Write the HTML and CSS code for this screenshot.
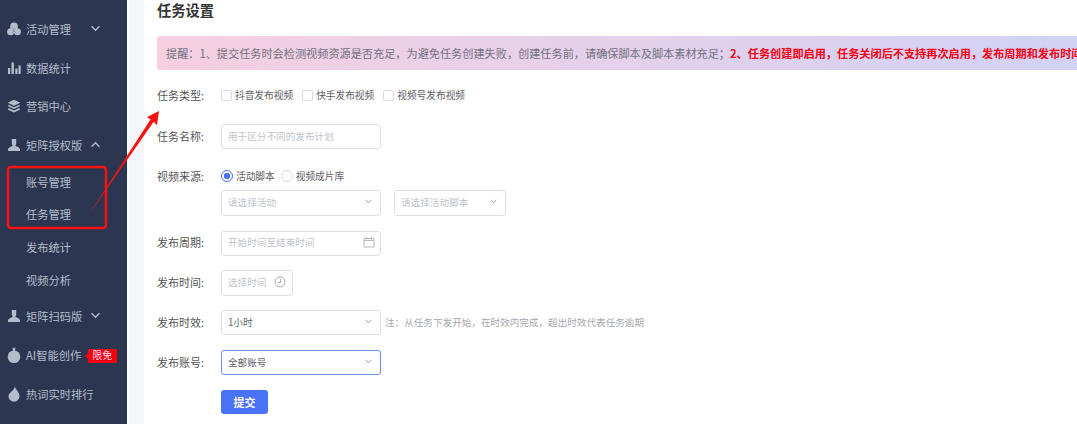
FILE: index.html
```html
<!DOCTYPE html>
<html lang="zh">
<head>
<meta charset="utf-8">
<title>任务设置</title>
<link rel="stylesheet" href="styles.css">
</head>
<body>
<div class="shell">
  <aside class="sidebar">
    <div class="item"><svg class="ic" viewBox="0 0 14 14"><circle cx="7" cy="4.300" r="3.800"/><circle cx="3.600" cy="9.700" r="3.500"/><circle cx="10.400" cy="9.700" r="3.500"/><path class="ic-cut" d="M7 5.500v3.500M7 9l-2.200 2M7 9l2.200 2"/></svg><span class="t">活动管理</span><svg class="ch ch-a" viewBox="0 0 12 8"><path d="M1.500 1.500 6 6l4.500-4.500"/></svg></div>
    <div class="item"><svg class="ic" viewBox="0 0 14 14"><path d="M1 7h2.200v6H1zM4.500 1.500h2.400V13H4.500zM8.300 7.500h2.200V13H8.300zM11.500 4.500h2.200V13h-2.200z"/></svg><span class="t">数据统计</span></div>
    <div class="item"><svg class="ic" viewBox="0 0 14 14"><path d="M7 .8l6.300 3L7 6.800l-6.300-3z"/><path d="M1.700 5.700 7 8.200l5.300-2.500.9 1.400L7 10 .8 7.100z"/><path d="M1.700 9.100 7 11.600l5.300-2.500.9 1.400L7 13.400.8 10.500z"/></svg><span class="t">营销中心</span></div>
    <div class="item"><svg class="ic" viewBox="0 0 14 14"><path d="M4.800 1h4.400v4.800L8.400 8c2 .6 4.100 1.300 4.600 3.500V13H1v-1.500C1.500 9.300 3.600 8.600 5.600 8l-.8-2.200z"/></svg><span class="t">矩阵授权版</span><svg class="ch ch-b" viewBox="0 0 12 8"><path d="M1.500 6.500 6 2l4.500 4.500"/></svg></div>
    <div class="sub sub-first">账号管理</div>
    <div class="sub">任务管理</div>
    <div class="sub">发布统计</div>
    <div class="sub">视频分析</div>
    <div class="item"><svg class="ic" viewBox="0 0 14 14"><path d="M4.800 1h4.400v4.800L8.400 8c2 .6 4.100 1.300 4.600 3.500V13H1v-1.500C1.500 9.300 3.600 8.600 5.600 8l-.8-2.200z"/></svg><span class="t">矩阵扫码版</span><svg class="ch ch-b" viewBox="0 0 12 8"><path d="M1.500 1.500 6 6l4.500-4.500"/></svg></div>
    <div class="item"><svg class="ic ic-l" viewBox="0 0 16 16"><circle cx="8" cy="9.700" r="6.300"/><path d="M6.500 .8h3L8.900 4H7.100z"/></svg><span class="t">AI智能创作</span><span class="badge">限免</span></div>
    <div class="item item-last"><svg class="ic ic-l" viewBox="0 0 16 16"><path d="M9 .5c.4 3.300 4.500 5.400 4.500 9.500A5.500 5.500 0 0 1 8 15.800 5.500 5.500 0 0 1 2.500 10C2.500 6.500 8 5 9 .5z"/></svg><span class="t">热词实时排行</span></div>
  </aside>
  <div class="gutter"></div>
  <main class="main">
    <h1 class="title">任务设置</h1>
    <div class="notice">提醒：1、提交任务时会检测视频资源是否充足，为避免任务创建失败，创建任务前，请确保脚本及脚本素材充足；<b>2、任务创建即启用，任务关闭后不支持再次启用，发布周期和发布时间</b></div>
    <div class="row row-type">
      <label class="lab">任务类型:</label>
      <div class="opts">
        <span class="opt"><i class="cb"></i>抖音发布视频</span>
        <span class="opt"><i class="cb"></i>快手发布视频</span>
        <span class="opt"><i class="cb"></i>视频号发布视频</span>
      </div>
    </div>
    <div class="row row-name">
      <label class="lab">任务名称:</label>
      <div class="field w160 ph">用于区分不同的发布计划</div>
    </div>
    <div class="row row-src">
      <label class="lab">视频来源:</label>
      <div class="opts opts-r">
        <span class="opt"><i class="rd on"></i>活动脚本</span>
        <span class="opt"><i class="rd"></i>视频成片库</span>
      </div>
    </div>
    <div class="row row-sel">
      <div class="lab"></div>
      <div class="field w160 h26 ph sel">请选择活动<svg class="arrow" viewBox="0 0 10 6"><path d="M1 1l4 3.500L9 1"/></svg></div>
      <div class="field w112 h26 ph sel gap13">请选择活动脚本<svg class="arrow" viewBox="0 0 10 6"><path d="M1 1l4 3.500L9 1"/></svg></div>
    </div>
    <div class="row row-date">
      <label class="lab">发布周期:</label>
      <div class="field w160 ph sel">开始时间至结束时间<svg class="cal" viewBox="0 0 12 12"><path d="M1 2.500h10v8.500H1zM1 4.500h10M3.500 1v2.500M8.500 1v2.500"/></svg></div>
    </div>
    <div class="row row-time">
      <label class="lab">发布时间:</label>
      <div class="field w72 h26 ph sel">选择时间<svg class="clock" viewBox="0 0 12 12"><circle cx="6" cy="6" r="5"/><path d="M6.500 3v3.500H3.500"/></svg></div>
    </div>
    <div class="row row-eff">
      <label class="lab">发布时效:</label>
      <div class="field w160 val sel">1小时<svg class="arrow" viewBox="0 0 10 6"><path d="M1 1l4 3.500L9 1"/></svg></div>
      <span class="hint">注：从任务下发开始，在时效内完成，超出时效代表任务逾期</span>
    </div>
    <div class="row row-acc">
      <label class="lab">发布账号:</label>
      <div class="field w160 val sel focus">全部账号<svg class="arrow" viewBox="0 0 10 6"><path d="M1 1l4 3.500L9 1"/></svg></div>
    </div>
    <div class="row row-btn">
      <div class="lab"></div>
      <button class="btn" type="button">提交</button>
    </div>
  </main>
</div>
<svg class="mark" viewBox="0 0 1077 424" aria-hidden="true">
  <rect x="8" y="167" width="98" height="61" rx="3" class="mark-box"/>
  <path d="M159 111 147 117 150.500 119.500 88 216 153.500 122 157 125z" class="mark-head"/>
</svg>
</body>
</html>
```

FILE: styles.css
```css
* { box-sizing: border-box; }
html, body { margin: 0; height: 100%; overflow: hidden; background: #fff; }
body { font-family: "Noto Sans CJK SC", "Noto Sans", sans-serif; position: relative; }
.shell { display: flex; height: 424px; width: 1077px; overflow: hidden; }
.sidebar { width: 127px; flex: none; background: #2c3650; padding-top: 9.5px; color: #b4bdcb; font-size: 11.25px; }
.gutter { width: 17px; flex: none; background: #f5f6fa; border-left: 2px solid #fbfcfd; }
.item { height: 38.7px; display: flex; align-items: center; padding-left: 7px; white-space: nowrap; }
.item-last { margin-top: 1px; }
.ic { width: 14px; height: 14px; flex: none; fill: #b4bdcb; margin-right: 5px; }
.ic-cut { fill: none; stroke: #7d8698; stroke-width: .8; }
.ic-l { width: 16px; height: 16px; margin-left: -1px; margin-right: 4px; }
.t { display: block; }
.ch { width: 11px; height: 7px; fill: none; stroke: #b4bdcb; stroke-width: 1.500; }
.ch-a { margin-left: 19px; }
.ch-b { margin-left: 8px; }
.sub { height: 32.7px; line-height: 32.7px; padding-left: 26px; }
.sub-first { margin-top: 1.5px; }
.badge { position: relative; background: #f4000c; color: #fde; font-size: 10px; line-height: 12px; height: 14px; width: 29px; border-radius: 1px; margin-left: 7px; margin-top: 2px; padding-left: 4px; }
.badge::before { content: ""; position: absolute; left: -3px; top: 4px; border: 3px solid transparent; border-left: 0; border-right-color: #f4000c; }
.main { flex: 1; min-width: 0; padding-left: 13px; overflow: hidden; color: #555; }
.title { margin: 0; font-size: 14.25px; line-height: 20px; font-weight: 700; color: #333; height: 36px; }
.notice { height: 34px; width: 960px; line-height: 34px; padding-left: 9px; font-size: 11.16px; white-space: nowrap; overflow: hidden; color: #71717f; background: linear-gradient(90deg, #f6cfe0, #d0d2f6); border-radius: 3px 0 0 3px; }
.notice b { color: #f40012; font-weight: 700; }
.row { display: flex; align-items: center; white-space: nowrap; }
.lab { width: 64px; flex: none; font-size: 11px; color: #555; padding-bottom: 2px; }
.row-type { height: 20px; margin-top: 16px; }
.row-name { height: 25px; margin-top: 18px; }
.row-src { height: 16px; margin-top: 20px; }
.row-sel { height: 26px; margin-top: 5px; }
.row-date { height: 24px; margin-top: 15px; }
.row-time { height: 26px; margin-top: 15px; }
.row-eff { height: 25px; margin-top: 14px; }
.row-acc { height: 25px; margin-top: 15px; }
.row-btn { height: 24px; margin-top: 15px; }
.opts { display: flex; gap: 9px; font-size: 9.7px; color: #5f6066; padding-bottom: 2px; }
.opts-r { gap: 6px; }
.opt { display: flex; align-items: center; }
.cb { width: 11px; height: 11px; border: 1px solid #d9dadf; border-radius: 2px; margin-right: 3px; background: #fff; }
.rd { width: 12px; height: 12px; border: 1px solid #d9dadf; border-radius: 50%; margin-right: 3px; background: #fff; }
.rd.on { border-color: #4a72f5; background: radial-gradient(circle, #4a72f5 3px, #fff 3.500px); }
.field { height: 25px; display: flex; align-items: center; justify-content: space-between; padding: 0 10px 2px 6px; border: 1px solid #dcdfe6; border-radius: 3px; font-size: 9.65px; background: #fff; flex: none; }
.h26 { height: 26px; }
.w160 { width: 160px; }
.w112 { width: 112px; }
.w72 { width: 72px; }
.gap13 { margin-left: 13px; }
.ph { color: #c0c4cc; }
.val { color: #606266; }
.focus { border-color: #6b8cf0; }
.arrow { width: 7px; height: 5px; fill: none; stroke: #8c8f96; stroke-width: 1.300; margin-right: -2px; margin-bottom: 1px; }
.cal { width: 12px; height: 12px; fill: none; stroke: #b6b8bf; stroke-width: 1; margin-right: -5px; }
.clock { width: 12px; height: 12px; fill: none; stroke: #a9abb2; stroke-width: 1; margin-right: -4px; }
.hint { margin-left: 4px; font-size: 9.6px; color: #a6a8ae; padding-bottom: 2px; }
.btn { width: 47px; height: 24px; border: 0; border-radius: 3px; background: #4a72f7; color: #fff; font: 700 11px "Noto Sans CJK SC", sans-serif; padding: 0; }
.mark { position: absolute; left: 0; top: 0; width: 1077px; height: 424px; pointer-events: none; }
.mark-box { fill: none; stroke: #f5140f; stroke-width: 2.500; }
.mark-head { fill: #f5140f; }
```
